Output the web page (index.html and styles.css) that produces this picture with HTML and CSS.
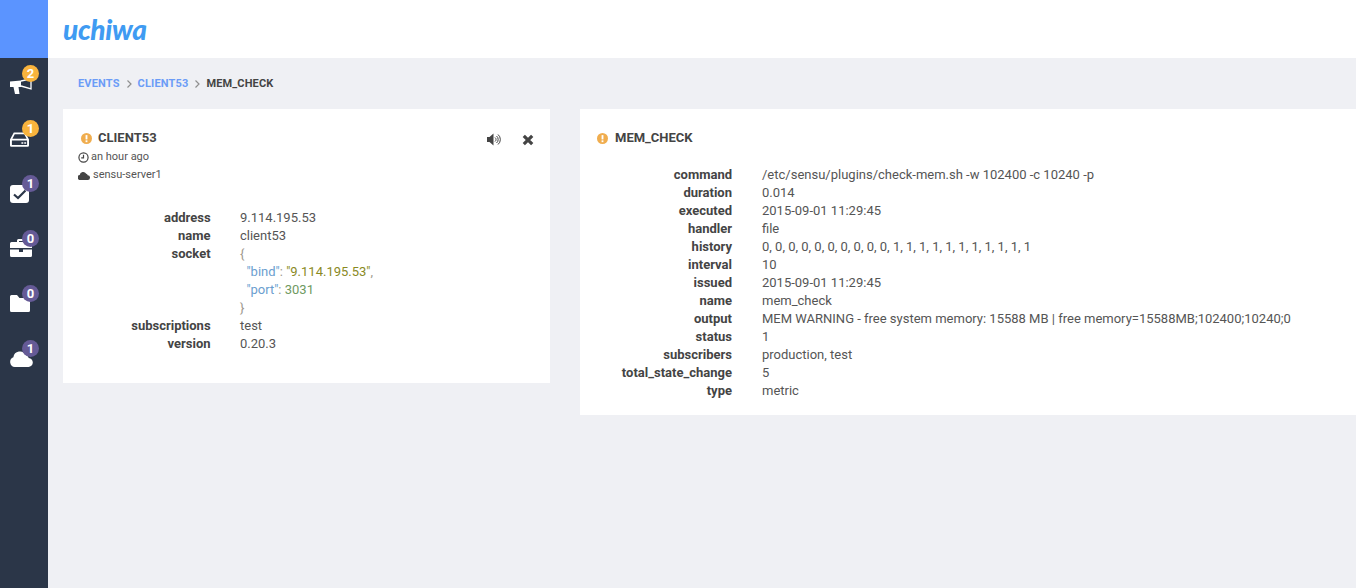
FILE: index.html
```html
<!DOCTYPE html>
<html lang="en">
<head>
<meta charset="utf-8">
<title>uchiwa</title>
<link rel="stylesheet" href="styles.css">
</head>
<body>
<div class="app">
  <aside class="sidebar">
    <div class="brand"></div>
    <nav class="nav">
      <a class="nav-item"><svg class="nav-icon" viewBox="0 0 24 24"><g transform="translate(0 4)"><path d="M0 3.500 11 2.500V9H8.500L9.500 16H5L3.500 9H0Z"/><path class="rim" d="M11 3 21 .8V10.800L11 8"/></g></svg><span class="badge warn">2</span></a>
      <a class="nav-item"><svg class="nav-icon" viewBox="0 0 24 24"><g transform="translate(0 2.500) scale(.95 .9)"><path fill-rule="evenodd" d="M4 1H16L20 9V15.500A1.500 1.500 0 0 1 18.500 17H1.500A1.500 1.500 0 0 1 0 15.500V9ZM5 3 2.500 8H17.500L15 3ZM2 10V15H18V10ZM12 12H14V13.500H12ZM15 12H17V13.500H15Z"/></g></svg><span class="badge warn">1</span></a>
      <a class="nav-item"><svg class="nav-icon" viewBox="0 0 24 24"><g transform="translate(0 1)"><path d="M3 0H16A3 3 0 0 1 19 3V15A3 3 0 0 1 16 18H3A3 3 0 0 1 0 15V3A3 3 0 0 1 3 0Z"/><path class="tick" d="M4 9.500 8 13 15.500 5.500"/></g></svg><span class="badge info">1</span></a>
      <a class="nav-item"><svg class="nav-icon" viewBox="0 0 24 24"><path fill-rule="evenodd" d="M7 3V1.500A1.500 1.500 0 0 1 8.500 0H13.500A1.500 1.500 0 0 1 15 1.500V3H20.500A1.500 1.500 0 0 1 22 4.500V9H0V4.500A1.500 1.500 0 0 1 1.500 3ZM9 2V3H13V2ZM0 10.500H9V13H13V10.500H22V16.500A1.500 1.500 0 0 1 20.500 18H1.500A1.500 1.500 0 0 1 0 16.500Z"/></svg><span class="badge info">0</span></a>
      <a class="nav-item"><svg class="nav-icon" viewBox="0 0 24 24"><path transform="translate(0 1)" d="M1.500 0H7L9.500 3H18.500A1.500 1.500 0 0 1 20 4.500V15.500A1.500 1.500 0 0 1 18.500 17H1.500A1.500 1.500 0 0 1 0 15.500V1.500A1.500 1.500 0 0 1 1.500 0Z"/></svg><span class="badge info">0</span></a>
      <a class="nav-item"><svg class="nav-icon" viewBox="0 0 24 24"><path transform="translate(0 1) scale(.96 1)" d="M5 17A5 5 0 0 1 3.500 7.300 7 7 0 0 1 16.500 5 4 4 0 0 1 19.500 8 4.500 4.500 0 0 1 19 17Z"/></svg><span class="badge info">1</span></a>
    </nav>
  </aside>
  <div class="main">
    <header class="topbar"><span class="logo">uchiwa</span></header>
    <ol class="crumbs">
      <li class="crumb link">Events</li>
      <li class="sep"><svg viewBox="0 0 6 8"><path d="M1.500 .5 5 4 1.500 7.500" /></svg></li>
      <li class="crumb link">client53</li>
      <li class="sep"><svg viewBox="0 0 6 8"><path d="M1.500 .5 5 4 1.500 7.500" /></svg></li>
      <li class="crumb">mem_check</li>
    </ol>
    <div class="cards">
      <section class="card card-client">
        <div class="card-head">
          <div>
            <h2 class="title"><svg class="alert" viewBox="0 0 12 12"><circle cx="6" cy="6" r="6"/><rect class="mark" x="5" y="2.300" width="2" height="4.700"/><rect class="mark" x="5" y="8" width="2" height="2"/></svg>CLIENT53</h2>
            <div class="meta"><svg class="meta-icon" viewBox="0 0 12 12"><circle class="ring" cx="6" cy="6" r="5"/><path class="ring" d="M6 3V6.500H3.500"/></svg>an hour ago</div>
            <div class="meta"><svg class="cloud-icon" viewBox="0 0 12 9"><path d="M2.500 9A2.500 2.500 0 0 1 1.700 4 3.500 3.500 0 0 1 8.200 2.700 2 2 0 0 1 9.700 4.200 2.400 2.400 0 0 1 9.500 9Z"/></svg>sensu-server1</div>
          </div>
          <div class="actions">
            <svg class="act-sound" viewBox="0 0 14 13"><path d="M0 4H2.500L6.500 .5V12.500L2.500 9H0Z"/><path class="wave" d="M8 4.500A2.500 2.500 0 0 1 8 8.500M9.500 3A4.500 4.500 0 0 1 9.500 10M11 1.500A6.500 6.500 0 0 1 11 11.500"/></svg>
            <svg class="act-close" viewBox="0 0 12 12"><path d="M1.800 1.800 10.200 10.200M10.200 1.800 1.800 10.200"/></svg>
          </div>
        </div>
        <dl class="props props-client">
          <dt>address</dt><dd>9.114.195.53</dd>
          <dt>name</dt><dd>client53</dd>
          <dt>socket</dt>
          <dd class="json"><span class="punc">{</span>
  <span class="key">"bind"</span><span class="punc">:</span> <span class="str">"9.114.195.53"</span><span class="punc">,</span>
  <span class="key">"port"</span><span class="punc">:</span> <span class="num">3031</span>
<span class="punc">}</span></dd>
          <dt>subscriptions</dt><dd>test</dd>
          <dt>version</dt><dd>0.20.3</dd>
        </dl>
      </section>
      <section class="card card-check">
        <h2 class="title title-check"><svg class="alert" viewBox="0 0 12 12"><circle cx="6" cy="6" r="6"/><rect class="mark" x="5" y="2.300" width="2" height="4.700"/><rect class="mark" x="5" y="8" width="2" height="2"/></svg>MEM_CHECK</h2>
        <dl class="props props-check">
          <dt>command</dt><dd>/etc/sensu/plugins/check-mem.sh -w 102400 -c 10240 -p</dd>
          <dt>duration</dt><dd>0.014</dd>
          <dt>executed</dt><dd>2015-09-01 11:29:45</dd>
          <dt>handler</dt><dd>file</dd>
          <dt>history</dt><dd>0, 0, 0, 0, 0, 0, 0, 0, 0, 0, 1, 1, 1, 1, 1, 1, 1, 1, 1, 1, 1</dd>
          <dt>interval</dt><dd>10</dd>
          <dt>issued</dt><dd>2015-09-01 11:29:45</dd>
          <dt>name</dt><dd>mem_check</dd>
          <dt>output</dt><dd>MEM WARNING - free system memory: 15588 MB | free memory=15588MB;102400;10240;0</dd>
          <dt>status</dt><dd>1</dd>
          <dt>subscribers</dt><dd>production, test</dd>
          <dt>total_state_change</dt><dd>5</dd>
          <dt>type</dt><dd>metric</dd>
        </dl>
      </section>
    </div>
  </div>
</div>
</body>
</html>
```
FILE: styles.css
```css
* { box-sizing: border-box; }
html, body { margin: 0; height: 100%; overflow: hidden; }
body { font-family: Roboto, "Liberation Sans", sans-serif; font-size: 13px; line-height: 18px; color: #555; background: #eff0f4; }
.app { display: flex; height: 588px; }
.sidebar { width: 48px; flex: none; background: #2b3648; display: flex; flex-direction: column; }
.brand { height: 58px; background: #5b94ff; }
.nav { display: flex; flex-direction: column; }
.nav-item { position: relative; height: 55px; padding: 16px 0 0 10px; display: block; }
.nav-icon { display: block; width: 24px; height: 24px; fill: #fff; }
.rim { fill: none; stroke: #fff; stroke-width: 1.300; }
.tick { fill: none; stroke: #2b3648; stroke-width: 2.200; }
.badge { position: absolute; left: 22px; top: 7px; width: 17px; height: 17px; border-radius: 50%; color: #fff; font-size: 13px; font-weight: 700; line-height: 17px; text-align: center; }
.badge.warn { background: #f9b43d; }
.badge.info { background: #655a96; }
.main { flex: 1; min-width: 0; display: flex; flex-direction: column; }
.topbar { height: 58px; background: #fff; display: flex; align-items: center; padding-left: 15px; flex: none; }
.logo { font-family: Lato, sans-serif; font-style: italic; font-weight: 900; font-size: 28px; line-height: 30px; letter-spacing: -.3px; color: #3f9bf2; }
.crumbs { list-style: none; margin: 0; padding: 17px 0 0 30px; height: 51px; display: flex; align-items: flex-start; text-transform: uppercase; font-size: 11px; font-weight: 700; letter-spacing: .15px; color: #444; }
.crumb.link { color: #6b9cf7; }
.sep { width: 18px; display: flex; justify-content: center; padding-top: 5px; }
.sep svg { width: 6px; height: 8px; fill: none; stroke: #8f8f8f; stroke-width: 1.2; }
.cards { display: flex; align-items: flex-start; gap: 30px; padding-left: 15px; }
.card { background: #fff; }
.card-client { width: 487px; height: 274px; padding: 20px 18px 0 18px; }
.card-check { flex: 1; height: 306px; padding: 20px 17px 0 17px; }
.card-head { display: flex; justify-content: space-between; align-items: flex-start; }
.title { margin: 0 0 1px; font-size: 13px; line-height: 18px; font-weight: 700; color: #444; display: flex; align-items: center; }
.alert { width: 11px; height: 11px; margin-right: 7px; flex: none; fill: #f0ad4e; }
.alert .mark { fill: #fff; }
.card-client .alert { margin-right: 6px; }
.meta { font-size: 11px; line-height: 18px; display: flex; align-items: center; margin-left: -3px; }
.meta-icon { width: 11px; height: 11px; margin-right: 2px; }
.ring { fill: none; stroke: #444; stroke-width: 1.300; }
.cloud-icon { width: 12px; height: 9px; margin-right: 3px; fill: #444; }
.actions { display: flex; align-items: center; gap: 21px; margin: 4px -2px 0 0; }
.act-sound { width: 14px; height: 13px; fill: #444; }
.wave { fill: none; stroke: #444; stroke-width: 1; }
.act-close { width: 12px; height: 12px; fill: none; stroke: #444; stroke-width: 3.200; }
.props { display: grid; margin: 0; grid-auto-rows: min-content; }
.props dt { font-weight: 700; color: #444; text-align: right; white-space: nowrap; }
.props dd { margin: 0; white-space: nowrap; }
.props-client { grid-template-columns: 129.600px 1fr; column-gap: 29.400px; margin-top: 25px; }
.props-check { grid-template-columns: 135px 1fr; column-gap: 30px; margin-top: 19px; }
.json { white-space: pre !important; }
.punc { color: #a09a8f; }
.key { color: #6b9ecf; }
.str { color: #8a8a1f; }
.num { color: #6f9a5f; }
```
